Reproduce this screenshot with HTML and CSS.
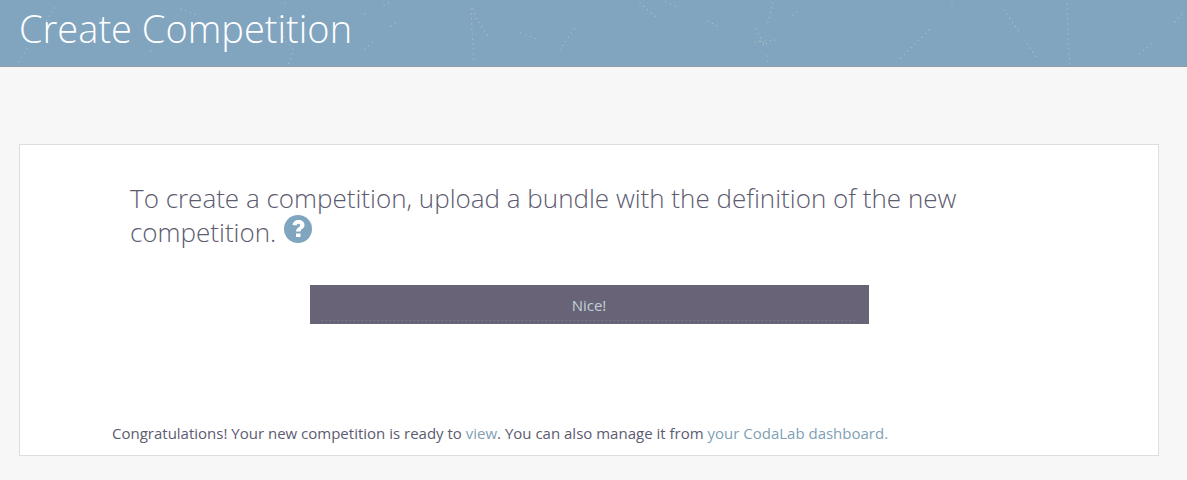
FILE: index.html
```html
<!DOCTYPE html>
<html lang="en">
<head>
<meta charset="utf-8">
<title>Create Competition</title>
<link rel="stylesheet" href="styles.css">
</head>
<body>
<header class="page-header">
  <svg class="constellation" viewBox="0 0 1187 67" preserveAspectRatio="xMidYMin slice" aria-hidden="true">
    <path d="M157 3h0M160 3h0M166 5h0M181 9l16 6M55 8l-9 13M27 49l-8 13M151 51l3 3M278 18l8 24M285 3v4M290 45l3 4l-1 6l-4 11M384 5l6-3M365 14l4-1M391 26l7-5M372 42l-8 8M471 9l1 22l2 31M473 9l3 9l14 21M521 33l15 6M574 29l-14 21M582 18h0M486 2h0M502 58h0M553 61h0M640 3l18 16M666 2l11 5M748 6h0M676 35h0M708 21l9 5M773 3l-6 23M756 29l7 14M755 42l20-2M760 41l5 5l3-5M767 56l1 6M784 38h0M793 15l5-4M832 23h0M898 2h0M952 5l4-2M929 30l-30 30M1004 10l15 22M1024 40l12 17M1067 4l1 34l2 28M1140 54l12-11M1175 22l10-11M1167 5h0"/>
  </svg>
  <h1 class="page-title">Create Competition</h1>
</header>
<main class="content">
  <section class="card">
    <h2 class="lead">To create a competition, upload a bundle with the definition of the new competition.
      <a class="help" href="#help" aria-label="Help"><svg viewBox="0 0 28 28" aria-hidden="true"><circle cx="14" cy="14" r="14"/><path d="M8.500 10C9 6.500 11.500 5 14.500 5C18 5 20.500 7 20.500 10C20.500 14 16.500 13.500 16.500 16.500H12C12 12.500 16 12.800 16 10.300C16 8.300 13 8.300 12.500 10.600ZM12 18.500H16.500V22H12Z"/></svg></a>
    </h2>
    <button class="upload" type="button">Nice!</button>
    <p class="status">Congratulations! Your new competition is ready to <a href="#view">view</a>. You can also manage it from <a href="#dashboard">your CodaLab dashboard.</a></p>
  </section>
</main>
</body>
</html>
```
FILE: styles.css
```css
* {
  box-sizing: border-box;
}

body {
  margin: 0;
  background: #f7f7f7;
  color: #5c5b70;
  font: 15px/24px "Open Sans", "Noto Sans", sans-serif;
}

a {
  color: #7f9fb5;
  text-decoration: none;
}

.page-header {
  position: relative;
  overflow: hidden;
  padding: 0 19px 10px;
  background: #81a5bf;
  border-bottom: 1px solid #929ba5;
}

.constellation {
  position: absolute;
  inset: 0;
  width: 100%;
  height: 100%;
  fill: none;
  stroke: #b9c5cb;
  stroke-width: 1;
  stroke-linecap: square;
  stroke-dasharray: 0 5;
}

.page-title {
  position: relative;
  margin: 0;
  color: #fff;
  font-size: 38px;
  font-weight: 300;
  line-height: 56px;
}

.content {
  padding: 77px 28px 24px 19px;
}

.card {
  padding: 36px 92px 10px;
  background: #fff;
  border: 1px solid #dedede;
}

.lead {
  margin: 0 92px 0 18px;
  font-size: 26px;
  font-weight: 300;
  line-height: 34px;
}

.help {
  display: inline-block;
  width: 28px;
  height: 28px;
  margin-left: 1px;
  vertical-align: -1px;
  line-height: 0;
}

.help circle {
  fill: #7fa5bf;
}

.help path {
  fill: #fff;
}

.upload {
  position: relative;
  display: block;
  width: 100%;
  max-width: 559px;
  margin: 36px auto 97px;
  padding: 8px 16px 7px;
  border: 0;
  background: #686377;
  color: #c3d0d6;
  font: inherit;
}

.upload::after {
  content: "";
  position: absolute;
  inset: auto 12px 3px;
  height: 1px;
  background: repeating-linear-gradient(90deg, #85808f 0 1px, transparent 1px 4px);
}

.status {
  margin: 0;
}
```
